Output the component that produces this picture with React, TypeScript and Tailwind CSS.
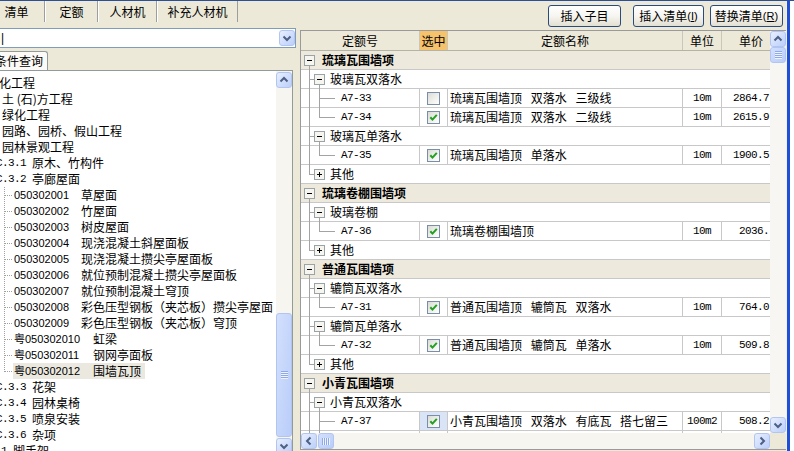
import React from 'react';

const cjk = "font-['Noto_Sans_CJK_SC',sans-serif]";
const mono = "font-['Liberation_Mono','Noto_Sans_CJK_SC',monospace] text-[11px] tracking-[-0.6px]";
const sans = "font-['Liberation_Sans','Noto_Sans_CJK_SC',sans-serif]";

type Item = { code: string; checked: boolean; name: string; unit: string; price: string; selected?: boolean; blank?: boolean };
type Sub = { title: string; items?: Item[]; open?: boolean };
type Group = { title: string; subs: Sub[]; open?: boolean };
type Line = [number, number, number, number];

const groups: Group[] = [
  {
    title: '琉璃瓦围墙项',
    subs: [
      {
        title: '玻璃瓦双落水',
        items: [
          { code: 'A7-33', checked: false, name: '琉璃瓦围墙顶 双落水 三级线', unit: '10m', price: '2864.7' },
          { code: 'A7-34', checked: true, name: '琉璃瓦围墙顶 双落水 二级线', unit: '10m', price: '2615.9' },
        ],
      },
      { title: '玻璃瓦单落水', items: [{ code: 'A7-35', checked: true, name: '琉璃瓦围墙顶 单落水', unit: '10m', price: '1900.5' }] },
      { title: '其他' },
    ],
  },
  {
    title: '琉璃卷棚围墙项',
    subs: [
      { title: '玻璃卷棚', items: [{ code: 'A7-36', checked: true, name: '琉璃卷棚围墙顶', unit: '10m', price: '2036.' }] },
      { title: '其他' },
    ],
  },
  {
    title: '普通瓦围墙项',
    subs: [
      { title: '辘筒瓦双落水', items: [{ code: 'A7-31', checked: true, name: '普通瓦围墙顶 辘筒瓦 双落水', unit: '10m', price: '764.0' }] },
      { title: '辘筒瓦单落水', items: [{ code: 'A7-32', checked: true, name: '普通瓦围墙顶 辘筒瓦 单落水', unit: '10m', price: '509.8' }] },
      { title: '其他' },
    ],
  },
  {
    title: '小青瓦围墙项',
    open: true,
    subs: [
      {
        title: '小青瓦双落水',
        open: true,
        items: [
          { code: 'A7-37', checked: true, selected: true, name: '小青瓦围墙顶 双落水 有底瓦 搭七留三', unit: '100m2', price: '508.2' },
          { code: '', checked: false, name: '', unit: '', price: '', blank: true },
        ],
      },
    ],
  },
];

function TreeSvg({ width, lines, box }: { width: number; lines: Line[]; box?: { x: number; plus?: boolean } }) {
  return (
    <svg width={width} height={19} className="shrink-0 self-start" shapeRendering="crispEdges">
      {lines.map(([x1, y1, x2, y2], i) => (
        <line key={i} x1={x1} y1={y1} x2={x2} y2={y2} stroke="#a3a3a3" strokeWidth={1} />
      ))}
      {box && (
        <g>
          <rect x={box.x + 0.5} y={4.5} width={10} height={10} fill="#f6f5f0" stroke="#9aa3a6" />
          <line x1={box.x + 3} y1={9.5} x2={box.x + 8} y2={9.5} stroke="#000" />
          {box.plus && <line x1={box.x + 5.5} y1={7} x2={box.x + 5.5} y2={12} stroke="#000" />}
        </g>
      )}
    </svg>
  );
}

function Check({ checked }: { checked: boolean }) {
  return (
    <div className="w-[13px] h-[13px] border border-[#7b8ea9] bg-linear-to-br from-[#dcdcd6] to-white flex items-center justify-center">
      {checked && (
        <svg width="9" height="9" viewBox="0 0 9 9">
          <path d="M1.3 4.2 L3.5 6.6 L7.8 1.8" stroke="#21a121" strokeWidth="2" fill="none" />
        </svg>
      )}
    </div>
  );
}

function ScrollBtn({ dir }: { dir: 'up' | 'down' | 'left' | 'right' }) {
  const pts = {
    up: '3.5,8.5 7,5 10.5,8.5',
    down: '3.5,5.5 7,9 10.5,5.5',
    left: '8.5,3.5 5,7 8.5,10.5',
    right: '5.5,3.5 9,7 5.5,10.5',
  }[dir];
  return (
    <div className="w-[16px] h-[16px] shrink-0 rounded-[3px] border border-[#b2c5f1] bg-linear-to-br from-[#e8effe] to-[#bccffa] flex items-center justify-center">
      <svg width="14" height="14" viewBox="0 0 14 14">
        <polyline points={pts} fill="none" stroke="#4d6185" strokeWidth="2" />
      </svg>
    </div>
  );
}

function Thumb({ vertical, className }: { vertical: boolean; className: string }) {
  return (
    <div className={`shrink-0 rounded-[3px] border border-[#b2c5f1] bg-linear-to-br from-[#d3e0fd] to-[#b9cdf9] flex items-center justify-center ${className}`}>
      <div className={vertical ? 'flex flex-col' : 'flex flex-row'}>
        {[0, 1, 2, 3].map((i) => (
          <div key={i} className={vertical ? 'w-[7px] h-[2px] border-t border-[#8da9ea] border-b border-b-[#eef3fe]' : 'h-[7px] w-[2px] border-l border-[#8da9ea] border-r border-r-[#eef3fe]'} />
        ))}
      </div>
    </div>
  );
}

function XPButton({ children, w }: { children: React.ReactNode; w: string }) {
  return (
    <div className={`h-[22px] ${w} shrink-0 rounded-[3px] border border-[#2b4c7a] bg-linear-to-b from-white via-[#f6f5f0] to-[#e2dfd3] flex items-center justify-center text-[12px] leading-none`}>
      {children}
    </div>
  );
}

const rowBorder = 'border-b border-[#c8c8c8]';

function GridRows() {
  const rows: React.ReactNode[] = [];
  groups.forEach((g, gi) => {
    rows.push(
      <div key={`g${gi}`} className={`flex h-[19px] shrink-0 bg-[#ede9dc] ${rowBorder}`}>
        <TreeSvg width={21} lines={[[8.5, 15, 8.5, 19]]} box={{ x: 3 }} />
        <span className="font-bold leading-[18px] whitespace-nowrap">{g.title}</span>
      </div>
    );
    g.subs.forEach((s, si) => {
      const lastSub = si === g.subs.length - 1 && !g.open;
      const subLines: Line[] = [
        [8.5, 0, 8.5, lastSub ? 10 : 19],
        [9, 9.5, 13, 9.5],
      ];
      if (s.items) subLines.push([18.5, 15, 18.5, 19]);
      rows.push(
        <div key={`s${gi}-${si}`} className={`flex h-[19px] shrink-0 bg-white ${rowBorder}`}>
          <TreeSvg width={29} lines={subLines} box={{ x: 13, plus: !s.items }} />
          <span className="leading-[18px] whitespace-nowrap">{s.title}</span>
        </div>
      );
      (s.items || []).forEach((it, ii) => {
        const lastItem = ii === (s.items as Item[]).length - 1 && !s.open;
        const l: Line[] = [];
        if (!lastSub) l.push([8.5, 0, 8.5, 19]);
        l.push([18.5, 0, 18.5, lastItem ? 10 : 19]);
        if (!it.blank) l.push([19, 9.5, 34, 9.5]);
        rows.push(
          <div key={`i${gi}-${si}-${ii}`} className={`flex h-[19px] shrink-0 bg-white ${rowBorder}`}>
            <div className="flex w-[119px] shrink-0 border-r border-[#c8c8c8]">
              <TreeSvg width={40} lines={l} />
              <span className={`${mono} leading-[18px]`}>{it.code}</span>
            </div>
            <div className={`w-[28px] shrink-0 border-r border-[#c8c8c8] flex items-center justify-center ${it.selected ? 'bg-[#d9e4f7]' : ''}`}>
              {!it.blank && <Check checked={it.checked} />}
            </div>
            <div className="w-[235px] shrink-0 border-r border-[#c8c8c8] pl-[2px] leading-[18px] whitespace-nowrap overflow-hidden [word-spacing:6px]">{it.name}</div>
            <div className={`w-[39px] shrink-0 border-r border-[#c8c8c8] text-center leading-[18px] ${mono}`}>{it.unit}</div>
            <div className={`flex-1 text-right pr-[1px] leading-[18px] whitespace-nowrap overflow-hidden ${mono}`}>{it.price}</div>
          </div>
        );
      });
    });
  });
  return <>{rows}</>;
}

function CodeRow({ code, name, wide, last, hl }: { code: string; name: string; wide?: boolean; last?: boolean; hl?: boolean }) {
  return (
    <div className="flex h-[16px] shrink-0 items-center whitespace-nowrap">
      <svg width="13" height="16" className="shrink-0" shapeRendering="crispEdges">
        <line x1="4.5" y1="0" x2="4.5" y2={last ? 9 : 16} stroke="#a0a0a0" strokeDasharray="1 1" />
        <line x1="5" y1="8.5" x2="13" y2="8.5" stroke="#a0a0a0" strokeDasharray="1 1" />
      </svg>
      <div className={`flex h-[16px] items-center pl-[1px] ${hl ? 'bg-[#ebe9df] w-[132px]' : ''}`}>
        <span className={`${wide ? 'w-[79px]' : 'w-[67px]'} shrink-0 ${sans} text-[11px]`}>{code}</span>
        <span>{name}</span>
      </div>
    </div>
  );
}

function SecRow({ prefix, name, ml }: { prefix: string; name: string; ml: string }) {
  return (
    <div className="flex h-[16px] shrink-0 items-center whitespace-nowrap">
      <span className={`${ml} whitespace-pre ${mono}`}>{prefix}</span>
      <span>{name}</span>
    </div>
  );
}

function LeftPanel() {
  const codes: [string, string][] = [
    ['050302001', '草屋面'],
    ['050302002', '竹屋面'],
    ['050302003', '树皮屋面'],
    ['050302004', '现浇混凝土斜屋面板'],
    ['050302005', '现浇混凝土攒尖亭屋面板'],
    ['050302006', '就位预制混凝土攒尖亭屋面板'],
    ['050302007', '就位预制混凝土穹顶'],
    ['050302008', '彩色压型钢板（夹芯板）攒尖亭屋面'],
    ['050302009', '彩色压型钢板（夹芯板）穹顶'],
  ];
  return (
    <div className="w-[300px] shrink-0 flex flex-col overflow-hidden">
      <div className="flex h-[21px] shrink-0">
        <div className="ml-[-11px] w-[56px] shrink-0 flex items-center justify-center border-r border-[#9d9d9d]">清单</div>
        <div className="w-[53px] shrink-0 flex items-center justify-center border-r border-[#9d9d9d] border-l border-l-white">定额</div>
        <div className="w-[59px] shrink-0 flex items-center justify-center border-r border-[#9d9d9d] border-l border-l-white">人材机</div>
        <div className="w-[81px] shrink-0 flex items-center justify-center border-r border-[#9d9d9d] border-l border-l-white">补充人材机</div>
      </div>
      <div className="mt-[6px] h-[20px] ml-[-1px] w-[297px] shrink-0 border border-[#7f9db9] bg-white flex items-center">
        <span className={`pl-[1px] ${sans} text-[12px] leading-none`}>|</span>
        <div className="flex-1" />
        <ScrollBtn dir="down" />
      </div>
      <div className="mt-[3px] h-[19px] ml-[-8px] w-[56px] shrink-0 border border-b-0 border-[#919b9c] rounded-tr-[3px] bg-[#fbfaf6] pl-[2px] flex items-center whitespace-nowrap">
        条件查询
      </div>
      <div className="h-[390px] w-[293px] shrink-0 flex border-t border-r border-[#919b9c] bg-white">
        <div className="flex-1 overflow-hidden pt-[4px] flex flex-col">
          <div className="flex h-[16px] shrink-0 items-center whitespace-nowrap"><span className="ml-[-1px]">化工程</span></div>
          <div className="flex h-[16px] shrink-0 items-center whitespace-nowrap"><span className="ml-[2px]">土 (石)方工程</span></div>
          <div className="flex h-[16px] shrink-0 items-center whitespace-nowrap"><span className="ml-[2px]">绿化工程</span></div>
          <div className="flex h-[16px] shrink-0 items-center whitespace-nowrap"><span className="ml-[2px]">园路、园桥、假山工程</span></div>
          <div className="flex h-[16px] shrink-0 items-center whitespace-nowrap"><span className="ml-[2px]">园林景观工程</span></div>
          <SecRow prefix="C.3.1 " name="原木、竹构件" ml="ml-[-4px]" />
          <SecRow prefix="C.3.2 " name="亭廊屋面" ml="ml-[-4px]" />
          {codes.map(([c, n]) => (
            <CodeRow key={c} code={c} name={n} />
          ))}
          <CodeRow code="粤050302010" name="虹梁" wide />
          <CodeRow code="粤050302011" name="钢网亭面板" wide />
          <CodeRow code="粤050302012" name="围墙瓦顶" wide last hl />
          <SecRow prefix="C.3.3 " name="花架" ml="ml-[-4px]" />
          <SecRow prefix="C.3.4 " name="园林桌椅" ml="ml-[-4px]" />
          <SecRow prefix="C.3.5 " name="喷泉安装" ml="ml-[-4px]" />
          <SecRow prefix="C.3.6 " name="杂项" ml="ml-[-4px]" />
          <SecRow prefix="1 " name="脚手架" ml="ml-[1px]" />
        </div>
        <div className="w-[16px] shrink-0 flex flex-col bg-[#f6f5f0]">
          <div className="mt-[1px]"><ScrollBtn dir="up" /></div>
          <div className="h-[225px] shrink-0" />
          <Thumb vertical className="h-[124px] w-[16px]" />
          <div className="h-[1px] shrink-0" />
          <ScrollBtn dir="down" />
        </div>
      </div>
    </div>
  );
}

function RightPanel() {
  return (
    <div className="w-[486px] shrink-0 flex flex-col">
      <div className="mt-[4px] h-[22px] shrink-0 flex justify-end pr-[3px]">
        <XPButton w="w-[73px]">插入子目</XPButton>
        <div className="w-[12px] shrink-0" />
        <XPButton w="w-[71px]">
          插入清单<span className={`${sans} text-[11px]`}>(<span className="underline">I</span>)</span>
        </XPButton>
        <div className="w-[6px] shrink-0" />
        <XPButton w="w-[73px]">
          替换清单<span className={`${sans} text-[11px]`}>(<span className="underline">R</span>)</span>
        </XPButton>
      </div>
      <div className="mt-[3px] h-[420px] shrink-0 border border-r-0 border-[#9a9a9a] flex bg-white">
        <div className="w-[469px] shrink-0 flex flex-col">
          <div className="flex h-[20px] shrink-0 border-b border-[#b5b2a6] bg-[#ece9d8]">
            <div className="w-[119px] shrink-0 border-r border-[#cbc7b8] flex items-center justify-center">定额号</div>
            <div className="w-[28px] shrink-0 border-r border-[#cbc7b8] bg-[#f6c26c] flex items-center justify-center">选中</div>
            <div className="w-[235px] shrink-0 border-r border-[#cbc7b8] flex items-center justify-center">定额名称</div>
            <div className="w-[39px] shrink-0 border-r border-[#cbc7b8] flex items-center justify-center">单位</div>
            <div className="flex-1 flex items-center justify-end pr-[7px]">单价</div>
          </div>
          <div className="h-[382px] shrink-0 overflow-hidden flex flex-col">
            <GridRows />
          </div>
          <div className="h-[16px] shrink-0 flex bg-[#f6f5f0]">
            <ScrollBtn dir="left" />
            <div className="w-[1px] shrink-0" />
            <Thumb vertical={false} className="w-[16px] h-[16px]" />
            <div className="flex-1" />
            <ScrollBtn dir="right" />
          </div>
        </div>
        <div className="w-[16px] shrink-0 flex flex-col bg-[#f7f6f2]">
          <ScrollBtn dir="up" />
          <Thumb vertical className="h-[16px] w-[16px]" />
          <div className="flex-1" />
          <ScrollBtn dir="down" />
          <div className="h-[16px] shrink-0 bg-[#ece9d8]" />
        </div>
      </div>
    </div>
  );
}

export default function App() {
  return (
    <div className={`w-[794px] h-[451px] overflow-hidden bg-[#ece9d8] border-t border-[#2d4f95] flex text-[12px] text-black ${cjk}`}>
      <LeftPanel />
      <RightPanel />
      <div className="flex w-[8px] shrink-0">
        <div className="w-[1px] bg-[#f1efe6]" />
        <div className="w-[3px] bg-[#1d4fd8]" />
        <div className="w-[4px] bg-white" />
      </div>
    </div>
  );
}
